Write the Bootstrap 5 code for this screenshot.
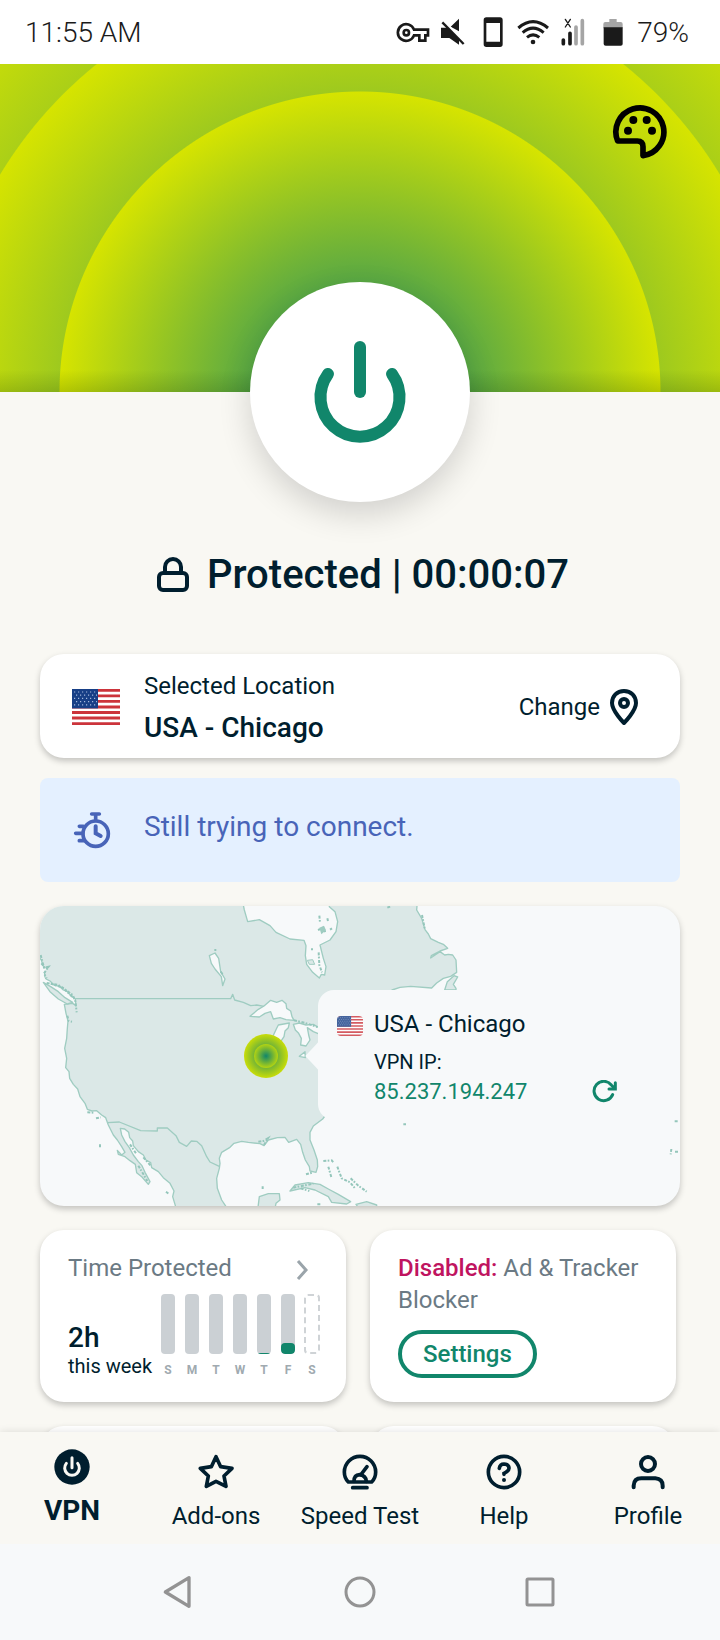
<!DOCTYPE html>
<html lang="en">
<head>
<meta charset="utf-8">
<meta name="viewport" content="width=device-width, initial-scale=1">
<title>VPN</title>
<link href="https://cdn.jsdelivr.net/npm/bootstrap@5.3.0/dist/css/bootstrap.min.css" rel="stylesheet">
<style>
  :root {
    --ink: #001e2e;
    --teal: #11866b;
    --sand: #f9f8f3;
    --mist: #f7f9fa;
    --slate: #6b7a84;
  }
  body {
    font-family: Roboto, "Liberation Sans", sans-serif;
    font-size: 24px;
    line-height: 32px;
    color: var(--ink);
    background: var(--sand);
  }
  svg { display: block; flex: none; }
  .status-bar {
    height: 64px;
    padding: 2px 31px 0 25px;
    font-size: 28px;
    font-weight: 300;
    color: #1a1a1a;
    background: #fff;
  }
  .hero {
    height: 328px;
    padding: 40px 52px;
    background:
      linear-gradient(to top, rgba(0, 40, 0, .16), rgba(0, 40, 0, 0) 22px),
      radial-gradient(circle at 50% 100%, #11866b 0, #d6e400 300px, rgba(214, 228, 0, 0) 301px),
      radial-gradient(circle at 50% 100%, #11866b 0, #d6e400 420px, rgba(214, 228, 0, 0) 421px),
      radial-gradient(circle at 50% 100%, #11866b 0, #d6e400 540px);
  }
  .power {
    width: 220px;
    height: 220px;
    margin-top: -110px;
    border-radius: 50%;
    background: #fff;
    color: var(--teal);
    box-shadow: 0 12px 32px rgba(0, 0, 0, .16);
  }
  .power:hover { background: #fff; color: var(--teal); }
  .headline {
    margin: 49px 0 55px;
    padding-left: 6px;
    gap: 18px;
    font-size: 40px;
    line-height: 48px;
    font-weight: 500;
  }
  .content { padding: 0 40px; }
  .panel {
    border-radius: 24px;
    background: #fff;
    box-shadow: 0 3px 6px rgba(0, 0, 0, .22);
  }
  .location { min-height: 104px; padding: 1px 40px 0 32px; gap: 24px; }
  .location p { line-height: 42px; }
  .change { gap: 8px; font-size: 24px; color: var(--ink); }
  .big { font-size: 28px; }
  .semi { font-weight: 500; }
  .notice {
    min-height: 104px;
    margin-top: 20px;
    padding: 0 33px;
    gap: 33px;
    border-radius: 8px;
    color: #4864b8;
    background: #e4f0ff;
  }
  .notice p { padding-bottom: 6px; }
  .map { margin-top: 24px; background: var(--mist); }
  .callout {
    left: 278px;
    right: 0;
    top: 84px;
    padding: 18px 58px 12px 19px;
    gap: 11px;
    border-radius: 16px;
    background: var(--mist);
  }
  .callout .caption { margin-top: 8px; font-size: 20px; line-height: 28px; }
  .ip { font-size: 22px; color: var(--teal); }
  .tiles { display: grid; grid-template-columns: 1fr 1fr; gap: 24px; margin-top: 24px; padding-right: 4px; }
  .tile { min-height: 172px; padding: 22px 27px 24px 28px; }
  .muted-text { color: var(--slate); }
  .usage { margin-top: 10px; }
  .total { width: 0; }
  .this-week { font-size: 20px; line-height: 24px; }
  .week { gap: 10px; font-size: 12px; line-height: 16px; font-weight: 700; color: #a0aab0; }
  .day { width: 14px; gap: 8px; }
  .track { width: 14px; height: 60px; border-radius: 4px; background: #cbd0d4; }
  .fill { background: var(--teal); border-radius: 4px; }
  .track.future { width: 16px; background: none; border: 2px dashed #cfd3d6; }
  .alert-word { color: #c0145f; font-weight: 500; }
  .settings {
    margin-top: 14px;
    padding: 4px 21px;
    border: 4px solid var(--teal);
    border-radius: 24px;
    color: var(--teal);
    background: none;
    font-weight: 500;
  }
  .tabs { height: 112px; background: var(--sand); box-shadow: 0 0 8px rgba(0, 0, 0, .12); }
  .tab { flex: 1 1 0; padding-top: 22px; gap: 10px; color: var(--ink); text-decoration: none; white-space: nowrap; }
  .tab.active { padding-top: 17px; font-size: 28px; font-weight: 700; }
  .system-nav { height: 96px; gap: 140px; background: var(--mist); }
  .system-nav .btn { color: #939393; }
</style>
</head>
<body>
<svg width="0" height="0" class="position-absolute" aria-hidden="true">
  <symbol id="flag" viewBox="0 0 48 36" preserveAspectRatio="none">
    <rect width="48" height="36" fill="#fff"/>
    <path d="M0 1.400h48M0 6.900h48M0 12.400h48M0 18h48M0 23.500h48M0 29h48M0 34.600h48" stroke="#cc343b" stroke-width="2.800"/>
    <rect width="26" height="19.400" fill="#173f86"/>
    <path d="M2 3h23M4 6.200h21M2 9.400h23M4 12.600h21M2 15.800h23" stroke="#a3b8dc" stroke-width="1.200" stroke-dasharray="1.200 2.800"/>
  </symbol>
</svg>

<div class="vh-100 d-flex flex-column overflow-hidden">
  <header class="status-bar d-flex align-items-center justify-content-between flex-shrink-0">
    <span>11:55 AM</span>
    <div class="d-flex align-items-center">
      <svg width="40" height="40" viewBox="39 38 120 120" fill="none" stroke="#1a1a1a" stroke-width="8"><path d="M102 88A25 25 0 1 0 102 105H118V121H136V105H144V88Z"/><circle cx="79" cy="97" r="8"/></svg>
      <svg width="40" height="40" viewBox="159 38 120 120"><path d="M183 82H204L237 115V133L208 113H183ZM237 55V93L212 79Z" fill="#1a1a1a"/><path d="M192 63L254 127" stroke="#fff" stroke-width="7"/><path d="M187 66L251 131" stroke="#1a1a1a" stroke-width="7"/></svg>
      <svg width="40" height="40" viewBox="279 38 120 120"><path fill="#1a1a1a" fill-rule="evenodd" d="M319 51H360Q368 51 368 59V132Q368 140 360 140H319Q311 140 311 132V59Q311 51 319 51ZM319 68V124H360V68Z"/></svg>
      <svg width="40" height="40" viewBox="399 38 120 120" fill="none" stroke="#1a1a1a" stroke-width="9"><path d="M415 83Q459 45 504 83M428 97Q459 70 491 97M441 111Q459 96 478 111"/><circle cx="459" cy="125" r="7" fill="#1a1a1a" stroke="none"/></svg>
      <svg width="40" height="40" viewBox="519 38 120 120" fill="none" stroke-width="11" stroke-linecap="round"><path d="M550 119V130M570 99V130" stroke="#1a1a1a"/><path d="M588 80V130M607 61V130" stroke="#a5a5a5"/><path d="M556 57L571 80M571 57L556 80" stroke="#1a1a1a" stroke-width="4"/></svg>
      <svg width="40" height="40" viewBox="639 38 120 120"><path d="M688 56H710V65H722Q728 65 728 71V84H670V71Q670 65 676 65H688Z" fill="#a5a5a5"/><path d="M671 81H728V131Q728 136 722 136H677Q671 136 671 131Z" fill="#1a1a1a"/></svg>
      <span class="ms-1">79%</span>
    </div>
  </header>

  <main class="flex-fill overflow-hidden">
    <section class="hero d-flex justify-content-end align-items-start">
      <button class="btn p-0 border-0" aria-label="Theme">
        <svg width="56" height="56" viewBox="696 312 168 168" fill="none" stroke="#000" stroke-width="17" stroke-linejoin="round"><path d="M713 423A72 72 0 1 1 789 467V440Q789 423 772 423Z"/><g fill="#000" stroke="none"><circle cx="760" cy="360" r="12"/><circle cx="800" cy="360" r="12"/><circle cx="744" cy="392" r="12"/><circle cx="816" cy="392" r="12"/></g></svg>
      </button>
    </section>

    <button class="power btn border-0 p-0 d-flex align-items-center justify-content-center mx-auto position-relative" aria-label="Disconnect">
      <svg width="104" height="104" viewBox="308 340 104 104" fill="none" stroke="currentColor" stroke-width="12" stroke-linecap="round"><path d="M360 347V392"/><path d="M328 374A39.500 39.500 0 1 0 392 374"/></svg>
    </button>

    <h1 class="headline d-flex align-items-center justify-content-center">
      <svg width="32" height="36" viewBox="0 0 32 36" fill="none" stroke="currentColor" stroke-width="4"><rect x="2" y="16" width="28" height="17" rx="4"/><path d="M8 16V10A8 8 0 0 1 24 10V16"/></svg>
      <span>Protected | 00:00:07</span>
    </h1>

    <div class="content">
      <section class="panel location d-flex align-items-center">
        <svg width="48" height="36" role="img" aria-label="United States flag"><use href="#flag"/></svg>
        <div class="flex-grow-1">
          <p class="mb-0">Selected Location</p>
          <p class="mb-0 big semi">USA - Chicago</p>
        </div>
        <button class="change btn p-0 border-0 d-flex align-items-center">
          Change
          <svg width="32" height="36" viewBox="-2 0 32 36" fill="none" stroke="currentColor" stroke-width="4" stroke-linejoin="round"><path d="M14 2C7 2 2 7 2 14C2 22 14 34 14 34S26 22 26 14C26 7 21 2 14 2Z"/><circle cx="14" cy="14" r="4"/></svg>
        </button>
      </section>

      <section class="notice d-flex align-items-center" role="status">
        <svg width="38" height="38" viewBox="129 122 114 114" fill="none" stroke="currentColor" stroke-width="11" stroke-linecap="round"><circle cx="197" cy="190" r="38"/><path d="M185 131H208M197 131V150"/><path d="M197 168V189L212 197" stroke-width="12"/><path d="M148 168H160M137 189H158M148 211H162"/></svg>
        <p class="mb-0 big">Still trying to connect.</p>
      </section>

      <section class="panel map position-relative overflow-hidden">
        <svg class="w-100 h-auto" viewBox="30 33 1920 900" role="img" aria-label="Map of North America">
          <g fill="#dbe8e7" stroke="#9fccc1" stroke-width="4" stroke-linejoin="round">
            <path d="M20 20V180L34 195L42 222L45 250L60 258L72 270L88 274L100 285L112 290L122 302L136 312L138 332L128 325L103 328L108 355L114 378L112 400L110 430L104 460L110 490L107 518L117 530L119 550L130 568L143 582L150 605L165 625L172 643L186 648L200 647L215 660L227 668L235 690L250 720L262 735L275 755L285 772L275 780L262 766L265 778L285 785L300 797L316 808L320 833L336 846L355 868L360 860L345 832L336 812L325 800L310 780L298 758L285 740L275 720L271 700L284 702L296 712L299 728L308 738L310 752L325 770L340 780L348 795L362 803L365 818L385 830L400 848L420 865L432 888L428 905L440 945H595L575 915L562 880L560 850L568 820L570 805L568 790L575 772L600 757L612 745L635 739L655 742L690 746L702 752L715 735L742 728L765 727L776 742L800 733L812 748L818 772L826 795L838 815L840 828L858 832L863 815L862 795L852 765L840 735L840 712L850 693L878 672L960 560L1086 285L1110 277L1142 274L1205 279L1220 264L1240 250L1262 244L1280 232L1278 195L1268 180L1255 178L1244 180L1230 170L1202 189L1204 182L1230 168L1253 160L1240 148L1225 142L1202 131L1195 117L1185 104L1175 70L1160 45L1162 20Z"/>
            <path d="M1244 285L1252 260L1272 242L1283 246L1270 268L1278 280V285Z"/>
            <path d="M40 262L62 275L85 290L105 308L128 322L112 327L85 312L60 290Z"/>
            <path d="M780 888L795 870L835 863L870 868L895 882L925 898L962 920L950 927L905 922L895 905L855 885L825 878Z"/>
            <path d="M683 945L688 905L715 896L748 896L750 915L738 925L734 945ZM978 928L1010 920L1040 930V945H990Z"/>
            <path d="M1938 933L1944 905L1955 890V945Z"/>
          </g>
          <path d="M33 210L48 222L40 240L50 262L36 258L28 300V200Z" fill="#f7f9fa"/>
          <g fill="#f7f9fa" stroke="#9fccc1" stroke-width="4" stroke-linejoin="round">
            <path d="M638 20L643 45L653 80L688 74L720 92L738 112L780 132L822 136L828 152L826 182L830 208L848 232L868 249L874 238L884 240L888 215L880 190L870 150L900 135L918 110L923 80L915 50L898 35V20Z"/>
            <path d="M538 182L555 174L566 190L572 230L585 252L578 272L574 245L555 222L544 205Z"/>
            <path d="M660 364L685 343L702 333L722 316L740 322L756 316L768 326L770 340L782 348L786 365L792 376L768 374L750 368L730 372L722 350L705 355L688 366Z"/>
            <path d="M728 425L740 400L745 390L778 384L775 398L765 408L762 425L752 440L738 450Z"/>
            <path d="M790 388L808 384L828 390L850 388L870 400V418L850 410L832 398L836 420L840 435L828 453L812 450L814 430L806 415L796 405Z"/>
            <path d="M808 484L825 470L826 488Z"/>
          </g>
          <path d="M868 438L826 483L868 528Z" fill="#f7f9fa"/>
          <g fill="none" stroke="#9fccc1" stroke-width="4" stroke-linejoin="round">
            <path d="M136 311H602L608 298L614 315L640 322L662 332L680 330L702 334"/>
            <path d="M232 683L268 681L332 707L382 708V699H412L438 722L448 742L470 754L484 738L500 739L515 752L530 785L540 801L568 814"/>
          </g>
          <g fill="none" stroke="#94c6bb" stroke-width="6" stroke-dasharray="9 4 5 5">
            <path d="M32 180L42 218L56 215L42 235L50 250"/>
            <path d="M50 264L85 270L112 288L128 300L136 318L140 352"/>
            <path d="M34 205L48 222L58 212M62 266L98 278L130 308"/>
            <path d="M112 362L116 378L126 380M172 652L192 653M198 670L212 667M210 748V758M408 890L418 898"/>
            <path d="M325 812L352 858M300 748L318 775M340 787L362 812"/>
            <path d="M868 62L870 82M892 70L894 78M864 105L880 98L886 112M900 104L906 100M846 160V166M866 172L868 210L876 232"/>
            <path d="M556 162V168M572 230L580 240M792 376L826 384L862 396"/>
            <path d="M685 740L700 738L714 730L702 750M828 838L850 832"/>
            <path d="M880 798L905 796L912 804M895 815L905 850M922 815L935 850L960 862L975 880M962 850L985 872L1010 890M790 878L850 866"/>
            <path d="M812 880L838 888M698 874V882M862 928H872M1120 688H1128M1934 679H1945M1924 762L1922 778M1935 770H1948M1072 38L1082 34M1176 60L1184 100"/>
          </g>
          <path d="M868 98L882 92L888 106L874 118Z" fill="#9fccc1"/>
          <path d="M832 196L848 194L854 208L838 208Z" fill="#dbe8e7" stroke="#9fccc1" stroke-width="3"/>
          <defs>
            <radialGradient id="pulse"><stop stop-color="#11866b"/><stop offset="1" stop-color="#c9dd08"/></radialGradient>
            <radialGradient id="pulseCore"><stop stop-color="#11866b"/><stop offset="1" stop-color="#b4d411"/></radialGradient>
          </defs>
          <circle cx="708" cy="483" r="66" fill="url(#pulse)"/>
          <circle cx="708" cy="483" r="36" fill="url(#pulseCore)"/>
        </svg>
        <div class="callout position-absolute d-flex">
          <svg class="rounded-1 mt-2" width="26" height="20" opacity=".8" aria-hidden="true"><use href="#flag"/></svg>
          <div class="flex-grow-1">
            <div>USA - Chicago</div>
            <div class="caption">VPN IP:</div>
            <div class="d-flex align-items-center justify-content-between">
              <span class="ip">85.237.194.247</span>
              <button class="ip btn p-0 border-0" aria-label="Refresh IP">
                <svg width="32" height="24" viewBox="844 552 96 72" fill="none" stroke="currentColor" stroke-width="9" stroke-linecap="round"><path d="M912 596A29 29 0 1 1 908 567L918 577"/><path d="M920 560V579H901"/></svg>
              </button>
            </div>
          </div>
        </div>
      </section>

      <div class="tiles">
        <section class="panel tile">
          <div class="d-flex justify-content-between align-items-center muted-text">
            <span>Time Protected</span>
            <svg width="24" height="24" viewBox="1 0 24 24" fill="none" stroke="#9aa4aa" stroke-width="3"><path d="M4 5L12 14L4 23"/></svg>
          </div>
          <div class="usage d-flex justify-content-between align-items-end">
            <div class="total text-nowrap">
              <div class="big semi">2h</div>
              <div class="this-week">this week</div>
            </div>
            <div class="week d-flex">
              <div class="day d-flex flex-column align-items-center"><div class="track"></div>S</div>
              <div class="day d-flex flex-column align-items-center"><div class="track"></div>M</div>
              <div class="day d-flex flex-column align-items-center"><div class="track"></div>T</div>
              <div class="day d-flex flex-column align-items-center"><div class="track"></div>W</div>
              <div class="day d-flex flex-column align-items-center"><div class="track d-flex align-items-end overflow-hidden"><div class="fill w-100" style="height:2%"></div></div>T</div>
              <div class="day d-flex flex-column align-items-center"><div class="track d-flex align-items-end overflow-hidden"><div class="fill w-100" style="height:18%"></div></div>F</div>
              <div class="day d-flex flex-column align-items-center"><div class="track future"></div>S</div>
            </div>
          </div>
        </section>
        <section class="panel tile">
          <div class="muted-text"><span class="alert-word">Disabled:</span> Ad &amp; Tracker Blocker</div>
          <button class="settings d-block">Settings</button>
        </section>
        <section class="panel tile"></section>
        <section class="panel tile"></section>
      </div>
    </div>
  </main>

  <nav class="tabs d-flex flex-shrink-0 position-relative" aria-label="Main">
    <a class="tab active d-flex flex-column align-items-center" href="#vpn" aria-current="page">
      <svg width="36" height="36" viewBox="163 149 108 108"><circle cx="217" cy="203" r="53" fill="#001e2e"/><path d="M217 175V205M200 192A22 22 0 1 0 234 192" fill="none" stroke="#f9f8f3" stroke-width="9" stroke-linecap="round"/></svg>
      VPN</a>
    <a class="tab d-flex flex-column align-items-center" href="#addons">
      <svg width="36" height="36" viewBox="595 163 108 108" fill="none" stroke="currentColor" stroke-width="11" stroke-linejoin="round"><path d="M649 171L663 201L697 206L673 229L679 260L649 245L620 260L626 229L602 206L635 201Z"/></svg>
      Add-ons</a>
    <a class="tab d-flex flex-column align-items-center" href="#speed">
      <svg width="36" height="36" viewBox="1028 163 108 108" fill="none" stroke="currentColor" stroke-width="11" stroke-linecap="round" stroke-linejoin="round"><path d="M1047 247Q1035 235 1035 217A47 47 0 0 1 1129 217Q1129 235 1117 247ZM1060 264H1103"/><path d="M1064 245Q1064 226 1081 225Q1100 228 1101 245M1084 226L1103 201"/></svg>
      Speed Test</a>
    <a class="tab d-flex flex-column align-items-center" href="#help">
      <svg width="36" height="36" viewBox="379 163 108 108" fill="none" stroke="currentColor" stroke-width="11" stroke-linecap="round"><circle cx="433" cy="217" r="47"/><path d="M419 206Q421 193 433 193Q448 194 448 206Q448 214 433 221V224"/><circle cx="433" cy="241" r="6" fill="currentColor" stroke="none"/></svg>
      Help</a>
    <a class="tab d-flex flex-column align-items-center" href="#profile">
      <svg width="36" height="36" viewBox="808 163 108 108" fill="none" stroke="currentColor" stroke-width="12" stroke-linecap="round"><circle cx="862" cy="193" r="21"/><path d="M819 263V258Q820 236 842 236H884Q906 238 906 258V263"/></svg>
      Profile</a>
  </nav>

  <nav class="system-nav d-flex flex-shrink-0 position-relative align-items-center justify-content-center" aria-label="System">
    <button class="btn p-0 border-0" aria-label="Back"><svg width="40" height="40" viewBox="480 516 120 120" fill="none" stroke="currentColor" stroke-width="10" stroke-linejoin="round"><path d="M496 576L567 533V619Z"/></svg></button>
    <button class="btn p-0 border-0" aria-label="Home"><svg width="40" height="40" viewBox="0 0 40 40" fill="none" stroke="currentColor" stroke-width="3"><circle cx="20" cy="20" r="14"/></svg></button>
    <button class="btn p-0 border-0" aria-label="Recent apps"><svg width="40" height="40" viewBox="0 0 40 40" fill="none" stroke="currentColor" stroke-width="3"><rect x="7" y="7" width="26" height="26" rx="1"/></svg></button>
  </nav>
</div>
<script src="https://cdn.jsdelivr.net/npm/bootstrap@5.3.0/dist/js/bootstrap.bundle.min.js"></script>
</body>
</html>
